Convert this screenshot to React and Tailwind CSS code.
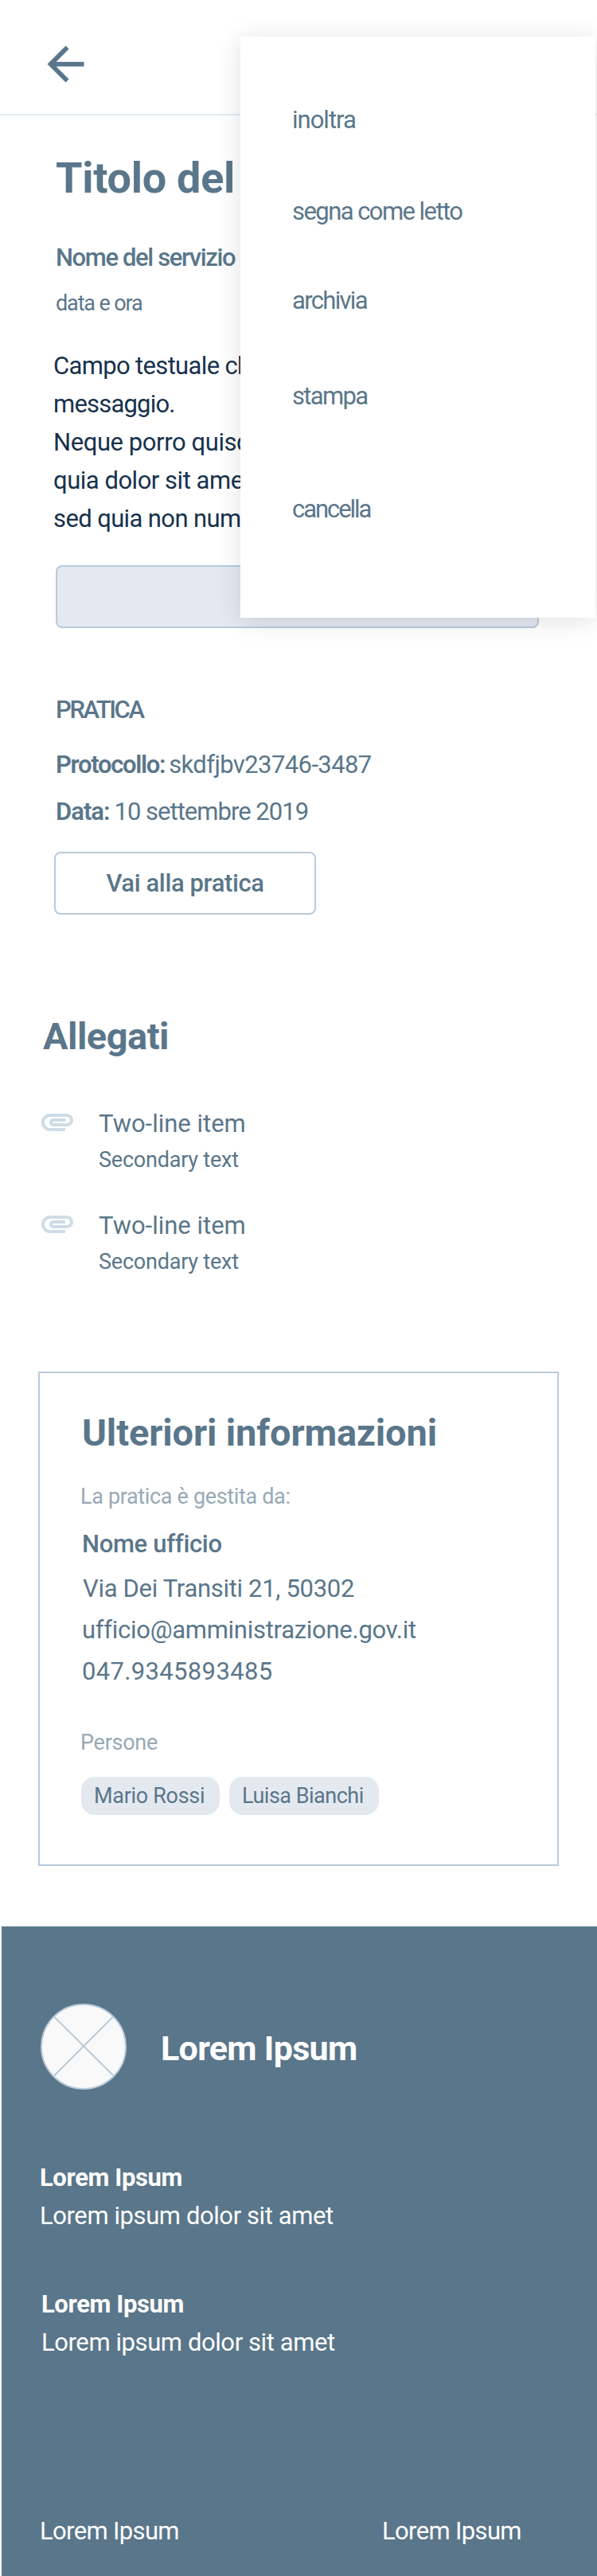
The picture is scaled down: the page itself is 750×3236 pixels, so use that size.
import React from "react";

const MENU_ITEMS = [
  { label: "inoltra", className: "tracking-[-1px]" },
  { label: "segna come letto", className: "mt-[67px] tracking-[-1.56px]" },
  { label: "archivia", className: "mt-[64px] tracking-[-1.68px]" },
  { label: "stampa", className: "mt-[72px] tracking-[-1.68px]" },
  { label: "cancella", className: "mt-[94px] tracking-[-2.06px]" },
];

const MESSAGE_LINES = [
  { text: "Campo testuale che", className: "tracking-[-0.66px]" },
  { text: "messaggio.", className: "tracking-[-0.8px]" },
  { text: "Neque porro quisq", className: "tracking-[-0.42px]" },
  { text: "quia dolor sit amet", className: "tracking-[-0.48px]" },
  { text: "sed quia non num", className: "tracking-[-0.62px]" },
];

function BackArrow() {
  return (
    <svg viewBox="0 0 24 24" className="size-[69px] fill-[#5a768a]">
      <path d="M20 11H7.83l5.59-5.59L12 4l-8 8 8 8 1.41-1.41L7.83 13H20v-2z" />
    </svg>
  );
}

function AttachmentIcon() {
  return (
    <svg viewBox="0 0 24 24" className="size-12 shrink-0 fill-[#cfdce6]">
      <path d="M2 12.5C2 9.46 4.46 7 7.5 7H18c2.21 0 4 1.79 4 4s-1.79 4-4 4H9.5C8.12 15 7 13.88 7 12.5S8.12 10 9.5 10H17v2H9.41c-.55 0-.55 1 0 1H18c1.1 0 2-.9 2-2s-.9-2-2-2H7.5C5.57 9 4 10.57 4 12.5S5.57 16 7.5 16H17v2H7.5C4.46 18 2 15.54 2 12.5z" />
    </svg>
  );
}

function Attachment() {
  return (
    <li className="flex gap-7">
      <AttachmentIcon />
      <div className="pt-[3px]">
        <p className="text-[31px] leading-[48px]">Two-line item</p>
        <p className="mt-px text-[27px] leading-[40px] tracking-[-0.22px]">Secondary text</p>
      </div>
    </li>
  );
}

function LogoPlaceholder() {
  return (
    <svg viewBox="0 0 108 108" className="size-[108px] shrink-0">
      <circle cx="54" cy="54" r="53" fill="#f9f9f9" stroke="#b9cbda" strokeWidth="2" />
      <path d="M17 16.5L91 90M91 16.5L17 90.5" stroke="#b9cbda" strokeWidth="2" />
    </svg>
  );
}

function FooterBlock({ className }) {
  return (
    <div className={className}>
      <p className="text-[31px] leading-[48px] font-bold tracking-[-0.4px]">Lorem Ipsum</p>
      <p className="text-[31px] leading-[48px] tracking-[-0.41px]">Lorem ipsum dolor sit amet</p>
    </div>
  );
}

function ContextMenu() {
  return (
    <ul className="absolute top-[46px] left-[302px] h-[730px] w-[446px] bg-white pt-[81px] pl-[65px] text-[31px] leading-[48px] shadow-[0_4px_30px_rgba(0,0,0,0.12)]">
      {MENU_ITEMS.map((item) => (
        <li key={item.label} className={item.className}>
          {item.label}
        </li>
      ))}
    </ul>
  );
}

export default function App() {
  return (
    <div className="relative h-[3236px] w-[750px] overflow-hidden bg-white font-[Roboto,sans-serif] text-[#5a768a]">
      <header className="h-[145px] border-b-2 border-[#e4ebf0] pt-[46px] pl-[48px]">
        <BackArrow />
      </header>

      <section className="pt-[47px] pl-[70px] whitespace-nowrap">
        <h1 className="text-[54px] leading-[64px] font-bold tracking-[-0.28px]">Titolo del</h1>
        <p className="mt-[44px] text-[31px] leading-[48px] font-medium tracking-[-1.38px]">Nome del servizio</p>
        <p className="mt-[13px] text-[27px] leading-[40px] tracking-[-1.13px]">data e ora</p>
        <div className="mt-[35px] -ml-[3px] text-[31px] leading-[48px] text-[#17324d]">
          {MESSAGE_LINES.map((line) => (
            <p key={line.text} className={line.className}>
              {line.text}
            </p>
          ))}
        </div>
        <div className="mt-[34px] h-[79px] w-[607px] rounded-lg border-2 border-[#b9cbda] bg-[#e4e9f1]" />

        <h2 className="mt-[79px] text-[31px] leading-[48px] font-medium tracking-[-2.4px]">PRATICA</h2>
        <p className="mt-[21px] flex gap-[5px] text-[31px] leading-[48px]">
          <span className="font-semibold tracking-[-1.31px]">Protocollo:</span>
          <span className="tracking-[-0.6px]">skdfjbv23746-3487</span>
        </p>
        <p className="mt-[11px] flex gap-[6px] text-[31px] leading-[48px]">
          <span className="font-semibold tracking-[-0.98px]">Data:</span>
          <span className="tracking-[-0.98px]">10 settembre 2019</span>
        </p>
        <button className="mt-[26px] -ml-0.5 flex h-[79px] w-[329px] items-center justify-center rounded-lg border-2 border-[#b9cbda] text-[31px] leading-[48px] font-medium tracking-[-0.38px]">
          Vai alla pratica
        </button>
      </section>

      <section className="pt-[121px] pl-[48px]">
        <h2 className="ml-[6px] text-[47px] leading-[64px] font-bold tracking-[-0.53px]">Allegati</h2>
        <ul className="mt-[51px] flex flex-col gap-9">
          <Attachment />
          <Attachment />
        </ul>
      </section>

      <section className="mt-[118px] ml-[48px] h-[621px] w-[654px] border-2 border-[#b9cbda] pt-[43px] pl-[53px] text-[31px] leading-[48px] whitespace-nowrap">
        <h2 className="text-[47px] leading-[64px] font-bold tracking-[-0.14px]">Ulteriori informazioni</h2>
        <p className="mt-[28px] -ml-0.5 text-[27px] leading-[40px] tracking-[-0.34px] text-[#98a9b6]">La pratica è gestita da:</p>
        <p className="mt-[16px] font-medium tracking-[-0.33px]">Nome ufficio</p>
        <p className="mt-[8px] ml-px tracking-[-0.31px]">Via Dei Transiti 21, 50302</p>
        <p className="mt-[4px] tracking-[-0.28px]">ufficio@amministrazione.gov.it</p>
        <p className="mt-[4px] tracking-[0.34px]">047.9345893485</p>
        <p className="mt-[45px] -ml-0.5 text-[27px] leading-[40px] tracking-[-0.26px] text-[#98a9b6]">Persone</p>
        <div className="mt-[23px] -ml-px flex gap-3 text-[27px] leading-[40px]">
          <span className="flex h-12 w-[174px] items-center rounded-[17px] bg-[#e4e9f0] pl-4 tracking-[-0.3px]">Mario Rossi</span>
          <span className="flex h-12 w-[188px] items-center rounded-[17px] bg-[#e4e9f0] pl-4 tracking-[-0.5px]">Luisa Bianchi</span>
        </div>
      </section>

      <footer className="mt-[76px] ml-0.5 h-[816px] bg-[#5a768a] pt-[97px] pl-[48px] text-white">
        <div className="ml-px flex gap-[43px]">
          <LogoPlaceholder />
          <p className="mt-[28px] text-[43px] leading-[56px] font-bold tracking-[-0.7px]">Lorem Ipsum</p>
        </div>
        <FooterBlock className="mt-[87px]" />
        <FooterBlock className="mt-[63px] ml-0.5" />
        <div className="mt-[189px] flex text-[31px] leading-[48px] tracking-[-0.65px]">
          <span className="w-[430px]">Lorem Ipsum</span>
          <span>Lorem Ipsum</span>
        </div>
      </footer>

      <ContextMenu />
    </div>
  );
}
